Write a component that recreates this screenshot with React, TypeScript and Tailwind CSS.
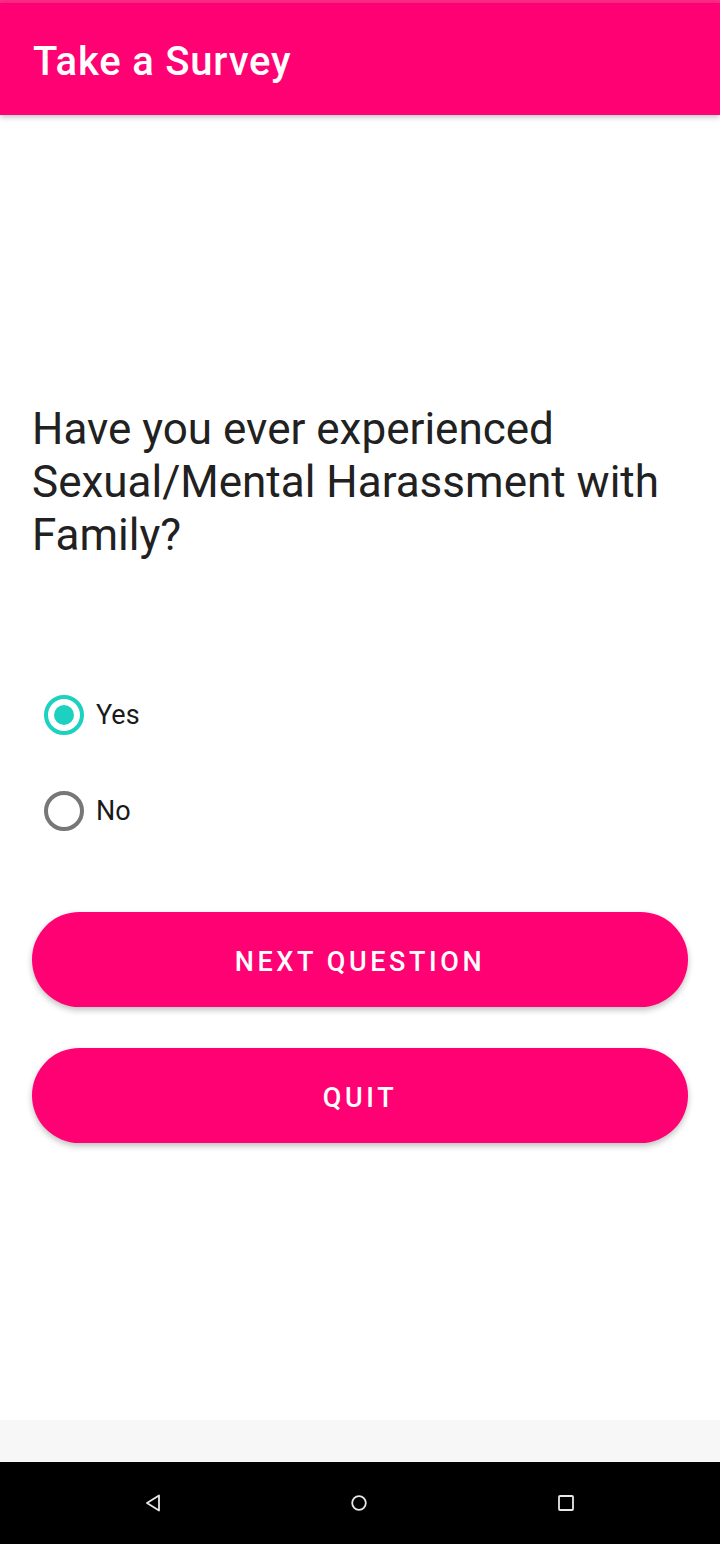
import { useState } from "react";

const font = { fontFamily: "Roboto, 'Liberation Sans', sans-serif" };

function Radio({ label, checked, onClick }: { label: string; checked: boolean; onClick: () => void }) {
  return (
    <button onClick={onClick} className="flex items-center h-[96px] w-fit">
      <span
        className={`w-[40px] h-[40px] rounded-full border-[4px] flex items-center justify-center ${
          checked ? "border-[#1dd1c1]" : "border-[#777777]"
        }`}
      >
        {checked && <span className="w-[20px] h-[20px] rounded-full bg-[#1dd1c1]" />}
      </span>
      <span className="ml-[12px] text-[27px] text-[#1a1a1a]">{label}</span>
    </button>
  );
}

export default function App() {
  const [answer, setAnswer] = useState<string>("yes");

  return (
    <div style={font} className="w-[720px] h-[1544px] flex flex-col bg-white overflow-hidden">
      {/* app bar */}
      <div className="h-[3px] bg-[#ff2a88]" />
      <div className="h-[112px] bg-[#ff0173] flex items-center px-[33px] shadow-[0_2px_6px_rgba(0,0,0,0.25)] z-10">
        <h1 className="text-white text-[40px] font-medium tracking-[0.8px] pt-[6px]">Take a Survey</h1>
      </div>

      <div className="flex-1 flex flex-col px-[32px]">
        <p className="mt-[288px] text-[44px] leading-[53px] text-[#212121]">
          Have you ever experienced Sexual/Mental Harassment with Family?
        </p>

        <div className="mt-[105px] flex flex-col pl-[12px]">
          <Radio label="Yes" checked={answer === "yes"} onClick={() => setAnswer("yes")} />
          <Radio label="No" checked={answer === "no"} onClick={() => setAnswer("no")} />
        </div>

        <div className="mt-[53px] flex flex-col gap-[41px]">
          <button className="h-[95px] w-full rounded-full bg-[#ff0173] text-white text-[27px] font-medium tracking-[3.6px] pt-[5px] shadow-[0_3px_6px_rgba(0,0,0,0.25)]">
            NEXT QUESTION
          </button>
          <button className="h-[95px] w-full rounded-full bg-[#ff0173] text-white text-[27px] font-medium tracking-[3.6px] pt-[5px] shadow-[0_3px_6px_rgba(0,0,0,0.25)]">
            QUIT
          </button>
        </div>
      </div>

      <div className="h-[42px] bg-[#f7f7f7]" />

      {/* system nav */}
      <div className="h-[82px] bg-black flex items-center justify-center gap-[190px] pb-[1px]">
        <svg width="16" height="18" viewBox="0 0 16 18" fill="none" stroke="#e8e8e8" strokeWidth="1.8" strokeLinejoin="round">
          <path d="M14 1.5 L2 9 L14 16.5 Z" />
        </svg>
        <svg width="16" height="16" viewBox="0 0 16 16" fill="none" stroke="#e8e8e8" strokeWidth="1.8">
          <circle cx="8" cy="8" r="6.8" />
        </svg>
        <svg width="18" height="18" viewBox="0 0 18 18" fill="none" stroke="#e8e8e8" strokeWidth="1.8">
          <rect x="2" y="2" width="14" height="14" rx="1" />
        </svg>
      </div>
    </div>
  );
}
